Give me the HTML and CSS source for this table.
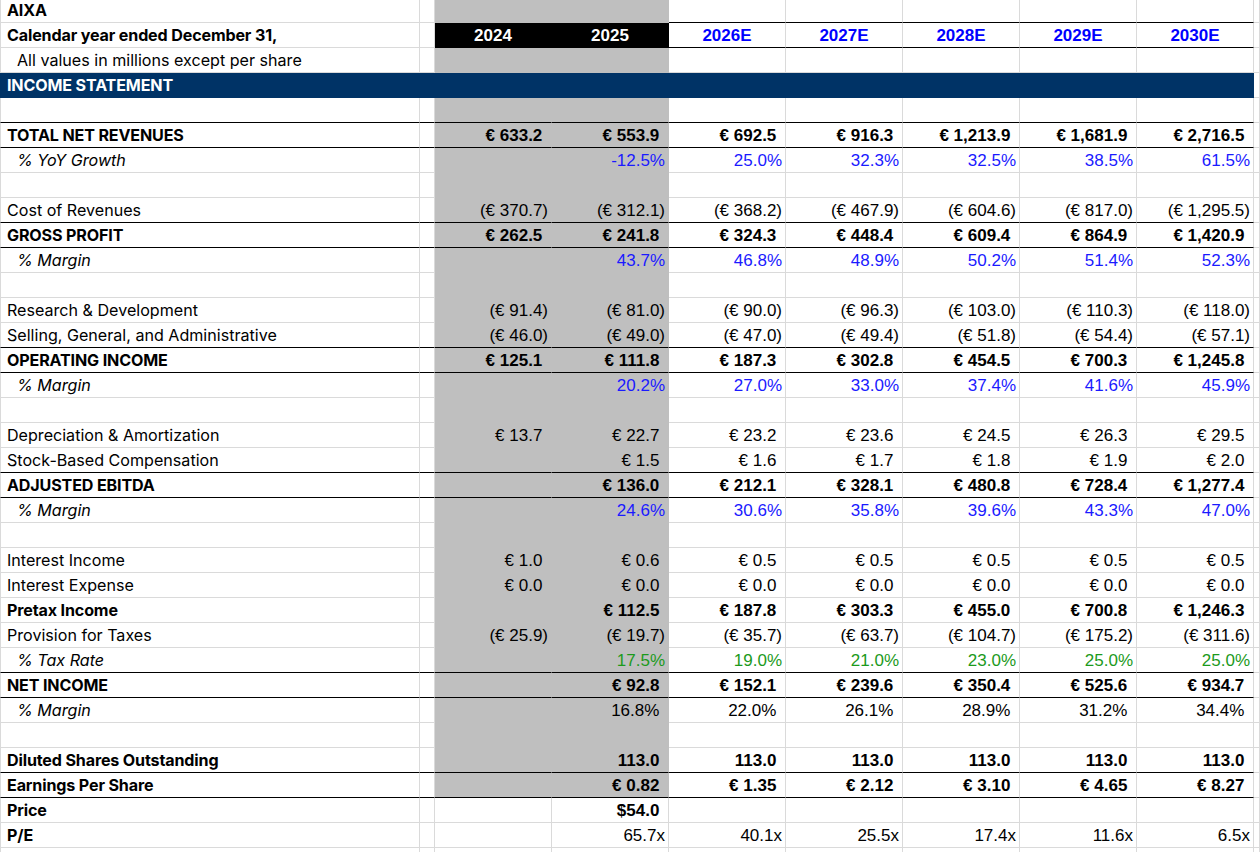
FILE: index.html
```html
<!DOCTYPE html>
<html lang="en">
<head>
<meta charset="utf-8">
<title>AIXA Income Statement</title>
<link rel="stylesheet" href="styles.css">
</head>
<body>
<div class="sheet">
  <div class="row top">
    <div class="c lab b">AIXA</div><div class="c"></div>
    <div class="c g"></div><div class="c g"></div>
    <div class="c e"></div><div class="c e"></div><div class="c e"></div><div class="c e"></div><div class="c e"></div>
    <div class="c f"></div>
  </div>
  <div class="row top">
    <div class="c lab b">Calendar year ended December 31,</div><div class="c"></div>
    <div class="c hd">2024</div><div class="c hd">2025</div>
    <div class="c e yr">2026E</div><div class="c e yr">2027E</div><div class="c e yr">2028E</div><div class="c e yr">2029E</div><div class="c e yr">2030E</div>
    <div class="c f"></div>
  </div>
  <div class="row">
    <div class="c lab ind">All values in millions except per share</div><div class="c"></div>
    <div class="c g"></div><div class="c g"></div>
    <div class="c"></div><div class="c"></div><div class="c"></div><div class="c"></div><div class="c"></div>
    <div class="c f"></div>
  </div>
  <div class="row sec">
    <div class="c lab b">INCOME STATEMENT</div><div class="c"></div>
    <div class="c"></div><div class="c"></div>
    <div class="c"></div><div class="c"></div><div class="c"></div><div class="c"></div><div class="c"></div>
    <div class="c f"></div>
  </div>
  <div class="row bb">
    <div class="c lab"></div><div class="c"></div>
    <div class="c g"></div><div class="c g"></div>
    <div class="c"></div><div class="c"></div><div class="c"></div><div class="c"></div><div class="c"></div>
    <div class="c f"></div>
  </div>
  <div class="row bb bold">
    <div class="c lab b">TOTAL NET REVENUES</div><div class="c"></div>
    <div class="c g p">€ 633.2</div><div class="c g p">€ 553.9</div>
    <div class="c p">€ 692.5</div><div class="c p">€ 916.3</div><div class="c p">€ 1,213.9</div><div class="c p">€ 1,681.9</div><div class="c p">€ 2,716.5</div>
    <div class="c f"></div>
  </div>
  <div class="row blue">
    <div class="c lab ind it">% YoY Growth</div><div class="c"></div>
    <div class="c g"></div><div class="c g">-12.5%</div>
    <div class="c">25.0%</div><div class="c">32.3%</div><div class="c">32.5%</div><div class="c">38.5%</div><div class="c">61.5%</div>
    <div class="c f"></div>
  </div>
  <div class="row">
    <div class="c lab"></div><div class="c"></div>
    <div class="c g"></div><div class="c g"></div>
    <div class="c"></div><div class="c"></div><div class="c"></div><div class="c"></div><div class="c"></div>
    <div class="c f"></div>
  </div>
  <div class="row bb">
    <div class="c lab">Cost of Revenues</div><div class="c"></div>
    <div class="c g">(€ 370.7)</div><div class="c g">(€ 312.1)</div>
    <div class="c">(€ 368.2)</div><div class="c">(€ 467.9)</div><div class="c">(€ 604.6)</div><div class="c">(€ 817.0)</div><div class="c">(€ 1,295.5)</div>
    <div class="c f"></div>
  </div>
  <div class="row bb bold">
    <div class="c lab b">GROSS PROFIT</div><div class="c"></div>
    <div class="c g p">€ 262.5</div><div class="c g p">€ 241.8</div>
    <div class="c p">€ 324.3</div><div class="c p">€ 448.4</div><div class="c p">€ 609.4</div><div class="c p">€ 864.9</div><div class="c p">€ 1,420.9</div>
    <div class="c f"></div>
  </div>
  <div class="row blue">
    <div class="c lab ind it">% Margin</div><div class="c"></div>
    <div class="c g"></div><div class="c g">43.7%</div>
    <div class="c">46.8%</div><div class="c">48.9%</div><div class="c">50.2%</div><div class="c">51.4%</div><div class="c">52.3%</div>
    <div class="c f"></div>
  </div>
  <div class="row">
    <div class="c lab"></div><div class="c"></div>
    <div class="c g"></div><div class="c g"></div>
    <div class="c"></div><div class="c"></div><div class="c"></div><div class="c"></div><div class="c"></div>
    <div class="c f"></div>
  </div>
  <div class="row">
    <div class="c lab">Research &amp; Development</div><div class="c"></div>
    <div class="c g">(€ 91.4)</div><div class="c g">(€ 81.0)</div>
    <div class="c">(€ 90.0)</div><div class="c">(€ 96.3)</div><div class="c">(€ 103.0)</div><div class="c">(€ 110.3)</div><div class="c">(€ 118.0)</div>
    <div class="c f"></div>
  </div>
  <div class="row bb">
    <div class="c lab">Selling, General, and Administrative</div><div class="c"></div>
    <div class="c g">(€ 46.0)</div><div class="c g">(€ 49.0)</div>
    <div class="c">(€ 47.0)</div><div class="c">(€ 49.4)</div><div class="c">(€ 51.8)</div><div class="c">(€ 54.4)</div><div class="c">(€ 57.1)</div>
    <div class="c f"></div>
  </div>
  <div class="row bb bold">
    <div class="c lab b">OPERATING INCOME</div><div class="c"></div>
    <div class="c g p">€ 125.1</div><div class="c g p">€ 111.8</div>
    <div class="c p">€ 187.3</div><div class="c p">€ 302.8</div><div class="c p">€ 454.5</div><div class="c p">€ 700.3</div><div class="c p">€ 1,245.8</div>
    <div class="c f"></div>
  </div>
  <div class="row blue">
    <div class="c lab ind it">% Margin</div><div class="c"></div>
    <div class="c g"></div><div class="c g">20.2%</div>
    <div class="c">27.0%</div><div class="c">33.0%</div><div class="c">37.4%</div><div class="c">41.6%</div><div class="c">45.9%</div>
    <div class="c f"></div>
  </div>
  <div class="row">
    <div class="c lab"></div><div class="c"></div>
    <div class="c g"></div><div class="c g"></div>
    <div class="c"></div><div class="c"></div><div class="c"></div><div class="c"></div><div class="c"></div>
    <div class="c f"></div>
  </div>
  <div class="row">
    <div class="c lab">Depreciation &amp; Amortization</div><div class="c"></div>
    <div class="c g p">€ 13.7</div><div class="c g p">€ 22.7</div>
    <div class="c p">€ 23.2</div><div class="c p">€ 23.6</div><div class="c p">€ 24.5</div><div class="c p">€ 26.3</div><div class="c p">€ 29.5</div>
    <div class="c f"></div>
  </div>
  <div class="row bb">
    <div class="c lab">Stock-Based Compensation</div><div class="c"></div>
    <div class="c g"></div><div class="c g p">€ 1.5</div>
    <div class="c p">€ 1.6</div><div class="c p">€ 1.7</div><div class="c p">€ 1.8</div><div class="c p">€ 1.9</div><div class="c p">€ 2.0</div>
    <div class="c f"></div>
  </div>
  <div class="row bb bold">
    <div class="c lab b">ADJUSTED EBITDA</div><div class="c"></div>
    <div class="c g"></div><div class="c g p">€ 136.0</div>
    <div class="c p">€ 212.1</div><div class="c p">€ 328.1</div><div class="c p">€ 480.8</div><div class="c p">€ 728.4</div><div class="c p">€ 1,277.4</div>
    <div class="c f"></div>
  </div>
  <div class="row blue">
    <div class="c lab ind it">% Margin</div><div class="c"></div>
    <div class="c g"></div><div class="c g">24.6%</div>
    <div class="c">30.6%</div><div class="c">35.8%</div><div class="c">39.6%</div><div class="c">43.3%</div><div class="c">47.0%</div>
    <div class="c f"></div>
  </div>
  <div class="row">
    <div class="c lab"></div><div class="c"></div>
    <div class="c g"></div><div class="c g"></div>
    <div class="c"></div><div class="c"></div><div class="c"></div><div class="c"></div><div class="c"></div>
    <div class="c f"></div>
  </div>
  <div class="row">
    <div class="c lab">Interest Income</div><div class="c"></div>
    <div class="c g p">€ 1.0</div><div class="c g p">€ 0.6</div>
    <div class="c p">€ 0.5</div><div class="c p">€ 0.5</div><div class="c p">€ 0.5</div><div class="c p">€ 0.5</div><div class="c p">€ 0.5</div>
    <div class="c f"></div>
  </div>
  <div class="row">
    <div class="c lab">Interest Expense</div><div class="c"></div>
    <div class="c g p">€ 0.0</div><div class="c g p">€ 0.0</div>
    <div class="c p">€ 0.0</div><div class="c p">€ 0.0</div><div class="c p">€ 0.0</div><div class="c p">€ 0.0</div><div class="c p">€ 0.0</div>
    <div class="c f"></div>
  </div>
  <div class="row bold">
    <div class="c lab b">Pretax Income</div><div class="c"></div>
    <div class="c g"></div><div class="c g p">€ 112.5</div>
    <div class="c p">€ 187.8</div><div class="c p">€ 303.3</div><div class="c p">€ 455.0</div><div class="c p">€ 700.8</div><div class="c p">€ 1,246.3</div>
    <div class="c f"></div>
  </div>
  <div class="row">
    <div class="c lab">Provision for Taxes</div><div class="c"></div>
    <div class="c g">(€ 25.9)</div><div class="c g">(€ 19.7)</div>
    <div class="c">(€ 35.7)</div><div class="c">(€ 63.7)</div><div class="c">(€ 104.7)</div><div class="c">(€ 175.2)</div><div class="c">(€ 311.6)</div>
    <div class="c f"></div>
  </div>
  <div class="row bb green">
    <div class="c lab ind it">% Tax Rate</div><div class="c"></div>
    <div class="c g"></div><div class="c g">17.5%</div>
    <div class="c">19.0%</div><div class="c">21.0%</div><div class="c">23.0%</div><div class="c">25.0%</div><div class="c">25.0%</div>
    <div class="c f"></div>
  </div>
  <div class="row bb bold">
    <div class="c lab b">NET INCOME</div><div class="c"></div>
    <div class="c g"></div><div class="c g p">€ 92.8</div>
    <div class="c p">€ 152.1</div><div class="c p">€ 239.6</div><div class="c p">€ 350.4</div><div class="c p">€ 525.6</div><div class="c p">€ 934.7</div>
    <div class="c f"></div>
  </div>
  <div class="row">
    <div class="c lab ind it">% Margin</div><div class="c"></div>
    <div class="c g"></div><div class="c g p">16.8%</div>
    <div class="c p">22.0%</div><div class="c p">26.1%</div><div class="c p">28.9%</div><div class="c p">31.2%</div><div class="c p">34.4%</div>
    <div class="c f"></div>
  </div>
  <div class="row">
    <div class="c lab"></div><div class="c"></div>
    <div class="c g"></div><div class="c g"></div>
    <div class="c"></div><div class="c"></div><div class="c"></div><div class="c"></div><div class="c"></div>
    <div class="c f"></div>
  </div>
  <div class="row bb bold">
    <div class="c lab b">Diluted Shares Outstanding</div><div class="c"></div>
    <div class="c g"></div><div class="c g p">113.0</div>
    <div class="c p">113.0</div><div class="c p">113.0</div><div class="c p">113.0</div><div class="c p">113.0</div><div class="c p">113.0</div>
    <div class="c f"></div>
  </div>
  <div class="row bb bold">
    <div class="c lab b">Earnings Per Share</div><div class="c"></div>
    <div class="c g"></div><div class="c g p">€ 0.82</div>
    <div class="c p">€ 1.35</div><div class="c p">€ 2.12</div><div class="c p">€ 3.10</div><div class="c p">€ 4.65</div><div class="c p">€ 8.27</div>
    <div class="c f"></div>
  </div>
  <div class="row bold">
    <div class="c lab b">Price</div><div class="c"></div>
    <div class="c"></div><div class="c p">$54.0</div>
    <div class="c"></div><div class="c"></div><div class="c"></div><div class="c"></div><div class="c"></div>
    <div class="c f"></div>
  </div>
  <div class="row">
    <div class="c lab b">P/E</div><div class="c"></div>
    <div class="c"></div><div class="c">65.7x</div>
    <div class="c">40.1x</div><div class="c">25.5x</div><div class="c">17.4x</div><div class="c">11.6x</div><div class="c">6.5x</div>
    <div class="c f"></div>
  </div>
  <div class="row">
    <div class="c lab"></div><div class="c"></div>
    <div class="c"></div><div class="c"></div>
    <div class="c"></div><div class="c"></div><div class="c"></div><div class="c"></div><div class="c"></div>
    <div class="c f"></div>
  </div>
</div>
</body>
</html>
```

FILE: styles.css
```css
html, body {
  margin: 0;
  padding: 0;
  background: #ffffff;
  overflow: hidden;
}

.sheet {
  margin-top: -2px;
  width: 1260px;
}

.row {
  display: grid;
  grid-template-columns: 420px 15px repeat(7, 117px) 1fr;
  height: 25px;
}

.c {
  box-sizing: border-box;
  height: 25px;
  border-right: 1px solid #dadada;
  border-bottom: 1px solid #dadada;
  padding: 3px 3px 0 0;
  line-height: 20px;
  text-align: right;
  white-space: nowrap;
  overflow: hidden;
  font-family: "Liberation Sans", Arial, sans-serif;
  font-size: 17px;
  color: #000000;
}

.lab {
  border-left: 1px solid #dadada;
  text-align: left;
  padding-top: 2px;
  padding-left: 6px;
  font-family: Inter, "Noto Sans", sans-serif;
  font-size: 16.1px;
}

.lab.b {
  font-weight: 700;
  letter-spacing: -0.15px;
}

.lab.ind {
  padding-left: 16px;
}

.lab.it {
  font-style: italic;
}

.bold .c {
  font-weight: 700;
}

.p {
  padding-right: calc(3px + 0.333em);
}

.g {
  background: #bfbfbf;
  border-right-color: #bfbfbf;
  border-bottom-color: #bfbfbf;
}

.bb .c:not(.f) {
  border-bottom-color: #000000;
}

.top .c.e {
  border-bottom-color: #000000;
}

.hd {
  background: #000000;
  border-color: #000000;
  color: #ffffff;
  font-weight: 700;
  text-align: center;
  padding-right: 0;
}

.yr {
  color: #0000ff;
  font-weight: 700;
  text-align: center;
  padding-right: 0;
}

.sec .c:not(.f) {
  background: #003366;
  border-color: #003366;
  color: #ffffff;
}

.blue .c:not(.lab) {
  color: #1a1aff;
}

.green .c:not(.lab) {
  color: #1c9a1c;
}
```
